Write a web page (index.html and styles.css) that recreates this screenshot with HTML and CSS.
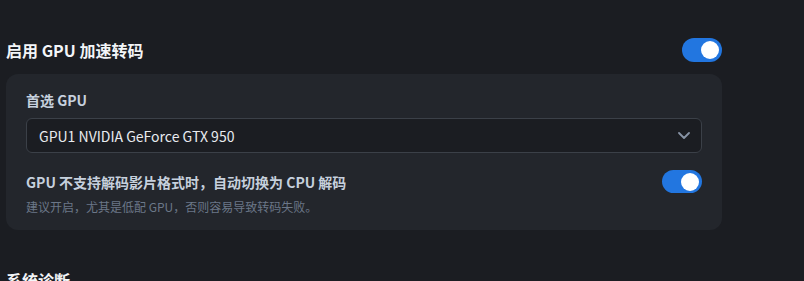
FILE: index.html
```html
<!DOCTYPE html>
<html lang="zh-CN">
<head>
    <meta charset="UTF-8">
    <meta name="viewport" content="width=device-width, initial-scale=1.0">
    <title>转码设置</title>
    <link rel="stylesheet" href="styles.css">
</head>
<body>
    <div class="settings">
        <div class="section-head">
            <h2>启用 GPU 加速转码</h2>
            <span class="switch on"><span class="knob"></span></span>
        </div>

        <div class="card">
            <label class="field-label">首选 GPU</label>
            <div class="select">
                <span>GPU1 NVIDIA GeForce GTX 950</span>
                <svg class="chevron" width="12" height="7" viewBox="0 0 12 7">
                    <path d="M1 1l5 5 5-5" fill="none" stroke="#8793a5" stroke-width="1.8" stroke-linecap="round" stroke-linejoin="round"/>
                </svg>
            </div>

            <div class="option-row">
                <div class="option-text">
                    <div class="option-title">GPU 不支持解码影片格式时，自动切换为 CPU 解码</div>
                    <div class="option-desc">建议开启，尤其是低配 GPU，否则容易导致转码失败。</div>
                </div>
                <span class="switch on"><span class="knob"></span></span>
            </div>
        </div>

        <div class="section-head next">
            <h2>系统诊断</h2>
        </div>
    </div>
</body>
</html>
```

FILE: styles.css
```css
body {
    margin: 0;
    background-color: #1b1d22;
    color: #eef1f5;
    font-family: "Noto Sans CJK SC", "Noto Sans", sans-serif;
}
.settings {
    width: 716px;
    margin-left: 6px;
    padding-top: 38px;
}
.section-head {
    display: flex;
    align-items: center;
    justify-content: space-between;
    height: 24px;
}
.section-head h2 {
    margin: 0;
    font-size: 16px;
    font-weight: 700;
    line-height: 24px;
    color: #f3f5f8;
}
.section-head.next {
    margin-top: 38px;
}
.switch {
    display: inline-block;
    position: relative;
    width: 40px;
    height: 24px;
    border-radius: 12px;
    background-color: #4a4f58;
    flex-shrink: 0;
}
.switch.on {
    background-color: #2276e0;
}
.knob {
    position: absolute;
    top: 3px;
    left: 3px;
    width: 18px;
    height: 18px;
    border-radius: 50%;
    background-color: #fff;
}
.switch.on .knob {
    left: 19px;
}
.card {
    margin-top: 12px;
    background-color: #23262c;
    border-radius: 12px;
    padding: 16px 20px 14px;
}
.field-label {
    display: block;
    font-size: 14px;
    font-weight: 600;
    line-height: 20px;
    color: #c6d0dd;
}
.select {
    margin-top: 8px;
    height: 33px;
    display: flex;
    align-items: center;
    justify-content: space-between;
    padding: 0 11px 0 12px;
    background-color: #1b1d22;
    border: 1px solid #3b4048;
    border-radius: 6px;
    font-size: 14px;
    color: #e8ebef;
}
.option-row {
    margin-top: 17px;
    display: flex;
    align-items: flex-start;
    justify-content: space-between;
}
.option-title {
    font-size: 14px;
    font-weight: 600;
    line-height: 24px;
    color: #c6d0dd;
}
.option-desc {
    margin-top: 4px;
    font-size: 12px;
    line-height: 18px;
    color: #6b7788;
}
.option-row .switch {
    height: 23px;
}
.option-row .switch .knob {
    top: 2.5px;
}
```
